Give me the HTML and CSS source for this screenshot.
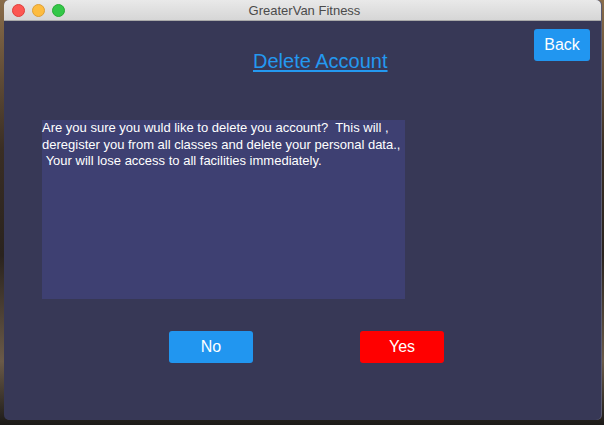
FILE: index.html
```html
<!DOCTYPE html>
<html>
<head>
<meta charset="utf-8">
<link rel="stylesheet" href="styles.css">
</head>
<body>
<div class="window">
  <div class="titlebar">
    <div class="lights">
      <span class="light red"></span>
      <span class="light yellow"></span>
      <span class="light green"></span>
    </div>
    <div class="title">GreaterVan Fitness</div>
  </div>
  <div class="content">
    <div class="header">
      <a class="heading">Delete Account</a>
      <button class="btn blue back">Back</button>
    </div>
    <div class="message">Are you sure you wuld like to delete you account?  This will ,
deregister you from all classes and delete your personal data.,
 Your will lose access to all facilities immediately.</div>
    <div class="actions">
      <button class="btn blue choice">No</button>
      <button class="btn red-btn choice">Yes</button>
    </div>
  </div>
</div>
</body>
</html>
```

FILE: styles.css
```css
html, body {
  margin: 0;
  padding: 0;
}
body {
  width: 604px;
  height: 425px;
  overflow: hidden;
  background: linear-gradient(180deg, #8a6d4a 0%, #3a2e24 35%, #2a231e 60%, #6a5a48 85%, #1c1a18 100%);
  font-family: "Liberation Sans", Arial, Helvetica, sans-serif;
}
.window {
  margin-left: 4px;
  width: 597px;
  height: 420px;
  background: #373856;
  border-radius: 5px;
  overflow: hidden;
  display: flex;
  flex-direction: column;
  box-shadow: 1px 0 0 #5a5b72;
}
.titlebar {
  height: 20px;
  flex: none;
  background: linear-gradient(180deg, #e9e9e9 0%, #d6d6d6 100%);
  border-bottom: 1px solid #a9a9a9;
  display: flex;
  align-items: center;
  position: relative;
}
.lights {
  display: flex;
  gap: 7px;
  padding-left: 8px;
}
.light {
  width: 13px;
  height: 13px;
  border-radius: 50%;
  box-sizing: border-box;
}
.red { background: #fc5753; border: 0.5px solid #df3e3a; }
.yellow { background: #fdbc40; border: 0.5px solid #de9f34; }
.green { background: #33c748; border: 0.5px solid #27aa35; }
.title {
  position: absolute;
  left: 0;
  right: 0;
  text-align: center;
  font-size: 13px;
  color: #4b4b4b;
  padding-left: 4px;
}
.content {
  flex: 1;
  display: flex;
  flex-direction: column;
}
.header {
  display: flex;
  align-items: flex-start;
  padding: 8px 11px 0 0;
  height: 44px;
}
.heading {
  margin-left: 249px;
  margin-top: 20px;
  font-size: 20px;
  line-height: 24px;
  color: #2499f0;
  text-decoration: underline;
  text-underline-offset: 2px;
}
.btn {
  border: none;
  border-radius: 3px;
  color: #ffffff;
  font-family: "Liberation Sans", Arial, Helvetica, sans-serif;
  font-size: 16px;
  height: 32px;
  padding: 0;
  margin: 0;
}
.blue { background: #2196f0; }
.red-btn { background: #ff0000; }
.back {
  margin-left: auto;
  width: 56px;
}
.message {
  margin: 47px 0 0 38px;
  width: 363px;
  height: 179px;
  background: #3e4072;
  color: #ffffff;
  font-size: 13px;
  line-height: 16.6px;
  white-space: pre-wrap;
  box-sizing: border-box;
  padding: 0;
}
.actions {
  display: flex;
  margin: 32px 0 0 165px;
  gap: 107px;
}
.choice {
  width: 84px;
  font-size: 16px;
}
```
